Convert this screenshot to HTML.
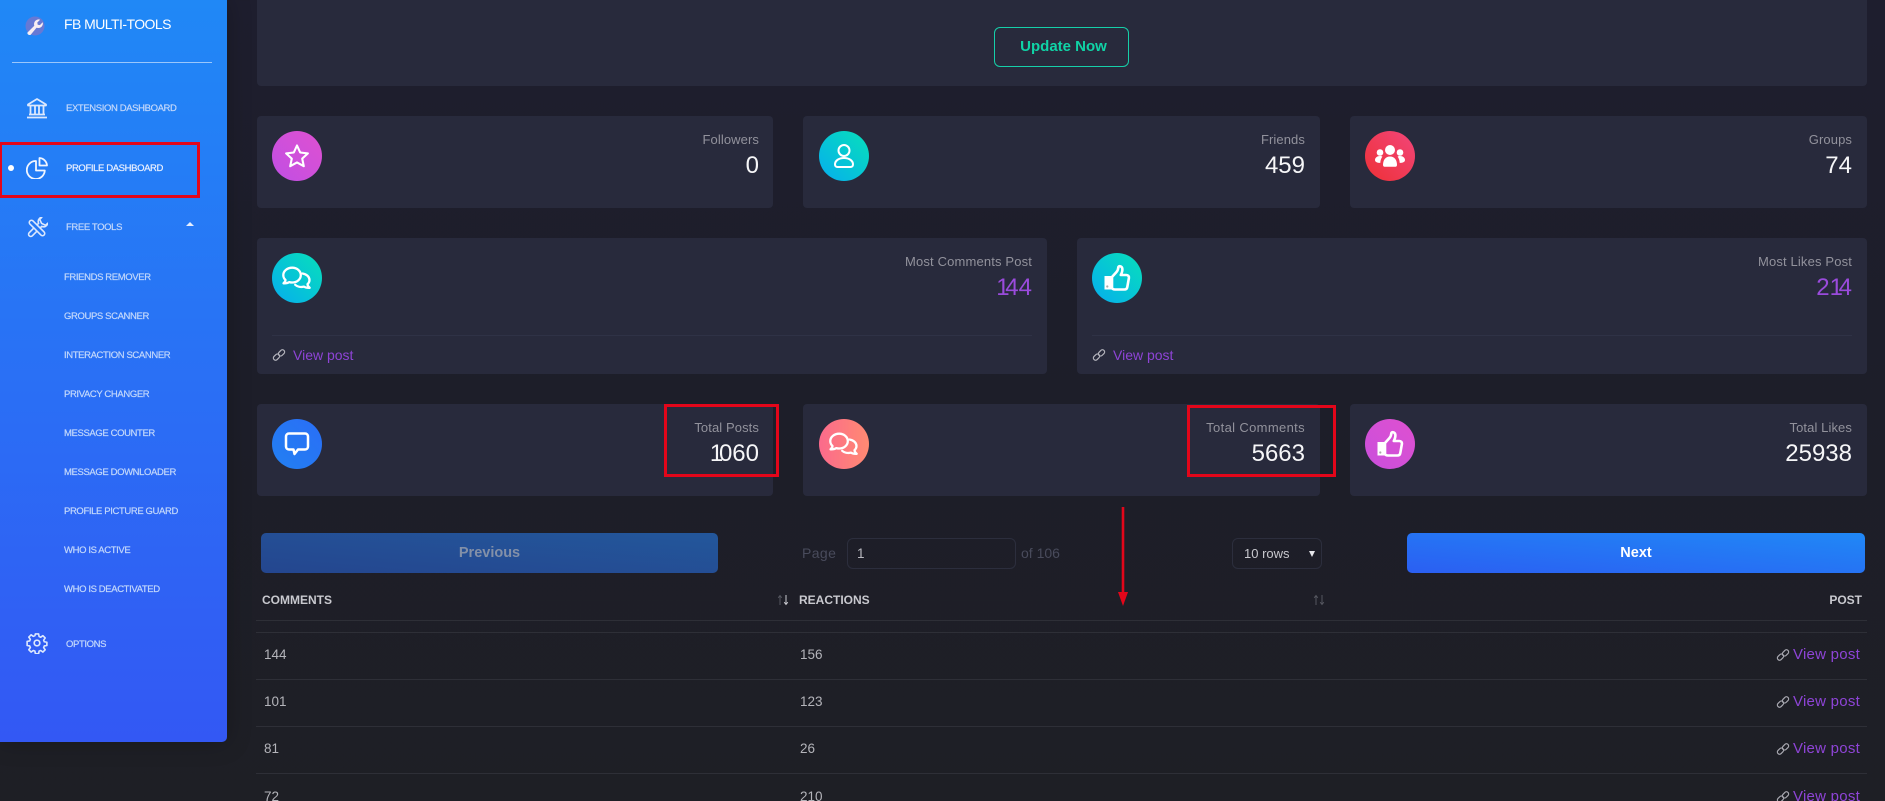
<!DOCTYPE html>
<html>
<head>
<meta charset="utf-8">
<style>
html,body{margin:0;padding:0;width:1885px;height:801px;overflow:hidden}
body{position:relative;background:linear-gradient(180deg,#1e1e2e 0%,#1d1e29 50%,#1e1f25 100%);font-family:"Liberation Sans",sans-serif;color:#fff}
.a{position:absolute;white-space:nowrap}
.card{position:absolute;background:#282a3c;border-radius:4px}
.ic{position:absolute;width:50px;height:50px;border-radius:50%}
.ic svg{position:absolute;left:9px;top:9px;width:32px;height:32px}
.lb{position:absolute;white-space:nowrap;font-size:13px;line-height:16px;color:#92929c;letter-spacing:.1px}
.nm{position:absolute;white-space:nowrap;font-size:24px;line-height:28px;color:#f6f6f8;margin-top:1px}
.nm i{font-style:normal;letter-spacing:-4.300px}
.pu{color:#9a4bdc}
.vp{position:absolute;white-space:nowrap;font-size:14px;line-height:18px;color:#8e44d6}
.dv{position:absolute;height:1px;background:#2f3246}
.side{position:absolute;left:0;top:0;width:227px;height:742px;background:linear-gradient(180deg,#2088f6 0%,#3358f4 100%);border-radius:0 0 5px 0;box-shadow:0 0 24px rgba(0,0,0,.25)}
.m{position:absolute;white-space:nowrap;font-size:9.5px;line-height:12px;letter-spacing:-.38px;color:#c3d8fb;-webkit-text-stroke:.2px #c3d8fb}
.si{position:absolute;left:26px;width:22px;height:22px}
.r{position:absolute;border:3px solid #e3061a;box-sizing:border-box}
.ln{position:absolute;left:256px;width:1611px;height:1px;background:#2e2f37}
.td{position:absolute;white-space:nowrap;font-size:13.5px;line-height:18px;color:#b4b4ba}
.th{position:absolute;white-space:nowrap;font-size:12px;line-height:14px;font-weight:bold;color:#c9c9cf}
.tv{position:absolute;white-space:nowrap;font-size:15px;line-height:18px;letter-spacing:.25px;color:#8e44d6}
svg{display:block}
</style>
</head>
<body>
<svg width="0" height="0" style="position:absolute">
<symbol id="chat" viewBox="0 0 32 32"><g fill="none" stroke="#fff" stroke-width="2.300" stroke-linejoin="round" stroke-linecap="round"><path d="M11.200 5.700c4.800 0 8.600 3.300 8.600 7.400s-3.800 7.400-8.600 7.400c-1 0-2-.15-2.900-.4-1.200.9-3 1.300-5.800 1.200 1.200-.9 1.900-2.100 2-3.300-1.400-1.300-2.200-3-2.200-4.900 0-4.100 3.900-7.400 8.900-7.400z"/><path d="M21.500 11.500c4 .6 7 3.300 7 6.500 0 1.600-.8 3.100-2 4.200.1 1.300.8 2.500 2.200 3.600-2.500.1-4.500-.3-5.800-1.200-3 .8-6.500.2-8.700-1.800"/></g></symbol>
<symbol id="thumb" viewBox="0 0 32 32"><path d="M3.500 14h7v13.500h-7z" fill="#fff"/><circle cx="6.300" cy="24.500" r="1.100" fill="#aaa"/><path d="M11 15l4.500-5c1-1.300 1.800-3 1.800-4.800 0-1.500 3.500-1.500 4 1.300.4 2.300-.5 4.500-1.500 6.500h5.500c1.800 0 2.900 1.300 2.600 3l-1.600 9c-.3 1.800-1.400 2.500-3 2.500H14c-1.500 0-3-.6-3-2z" fill="none" stroke="#fff" stroke-width="2.600" stroke-linejoin="round"/></symbol>
<symbol id="link" viewBox="0 0 14 14"><g fill="none" stroke="currentColor" stroke-width="1.200"><rect x="6" y="2.700" width="7" height="4.400" rx="2.200" transform="rotate(-45 9.500 4.900)"/><rect x="1" y="6.900" width="7" height="4.400" rx="2.200" transform="rotate(-45 4.500 9.100)"/></g></symbol>
<symbol id="sort" viewBox="0 0 14 12"><path d="M4 11V2M2.200 3.800L4 1.500l1.800 2.300" stroke="#55565f" stroke-width="1" fill="none"/><path d="M10 1v9M8.200 8.200L10 10.500l1.800-2.300" stroke="currentColor" stroke-width="1" fill="none"/></symbol>
</svg>

<!-- main content -->
<div class="card" style="left:257px;top:-10px;width:1610px;height:96px"></div>
<div class="a" style="left:994px;top:27px;width:135px;height:40px;box-sizing:border-box;border:1px solid #16cfa9;border-radius:6px;text-align:center;font-size:15px;font-weight:bold;line-height:38px;color:#10d3a6;padding-left:4px">Update Now</div>

<!-- row 1 -->
<div class="card" style="left:257px;top:116px;width:516px;height:92px"></div>
<div class="card" style="left:803px;top:116px;width:517px;height:92px"></div>
<div class="card" style="left:1350px;top:116px;width:517px;height:92px"></div>

<div class="ic" style="left:272px;top:131px;background:linear-gradient(to bottom left,#df50d0,#c04fe4)"><svg viewBox="0 0 32 32"><path d="M16 5.500l3.200 7 7.700 .9-5.700 5.200 1.600 7.600L16 22.400l-6.800 3.800 1.600-7.600-5.700-5.200 7.700-.9z" fill="none" stroke="#fff" stroke-width="2.100" stroke-linejoin="round"/></svg></div>
<div class="lb" style="right:1126px;top:132px">Followers</div>
<div class="nm" style="right:1126px;top:151px">0</div>

<div class="ic" style="left:819px;top:131px;background:linear-gradient(to bottom left,#07e0ba,#06aeee)"><svg viewBox="0 0 32 32"><g fill="none" stroke="#fff" stroke-width="2"><circle cx="16" cy="10.500" r="5.500"/><path d="M7 24.500c0-4 4-6.500 9-6.500s9 2.500 9 6.500c0 1.500-1 2.500-2.500 2.500h-13C8 27 7 26 7 24.500z"/></g></svg></div>
<div class="lb" style="right:580px;top:132px">Friends</div>
<div class="nm" style="right:580px;top:151px">459</div>

<div class="ic" style="left:1365px;top:131px;background:linear-gradient(to bottom left,#f2467a,#ee3036)"><svg viewBox="0 0 32 32"><g fill="#fff"><circle cx="16" cy="10" r="5"/><circle cx="6" cy="12.500" r="3.300"/><circle cx="26" cy="12.500" r="3.300"/><path d="M9 25c0-5 2.500-8.500 7-8.500s7 3.500 7 8.500c0 1-.7 1.700-1.500 1.700h-11C9.700 26.700 9 26 9 25z"/><path d="M1 20c0-2.300 2.200-4 5-4 1 0 1.800.2 2.400.6-1.200 1.500-2 3.700-2.100 6.300C3 22.900 1 21.800 1 20z"/><path d="M31 20c0-2.300-2.200-4-5-4-1 0-1.800.2-2.400.6 1.200 1.500 2 3.700 2.100 6.300 3.300 0 5.300-1.100 5.300-2.900z"/></g></svg></div>
<div class="lb" style="right:33px;top:132px">Groups</div>
<div class="nm" style="right:33px;top:151px">74</div>

<!-- row 2 -->
<div class="card" style="left:257px;top:238px;width:790px;height:136px"></div>
<div class="card" style="left:1077px;top:238px;width:790px;height:136px"></div>

<div class="ic" style="left:272px;top:253px;background:linear-gradient(to bottom left,#07e0ba,#06aeee)"><svg viewBox="0 0 32 32"><use href="#chat"/></svg></div>
<div class="lb" style="right:853px;top:254px;letter-spacing:.15px">Most Comments Post</div>
<div class="nm pu" style="right:853px;top:273px"><i>1</i>44</div>
<div class="dv" style="left:272px;top:335px;width:760px"></div>
<svg class="a" style="left:272px;top:348px;width:14px;height:14px;color:#b5b5bd"><use href="#link"/></svg>
<div class="vp" style="left:293px;top:346px">View post</div>

<div class="ic" style="left:1092px;top:253px;background:linear-gradient(to bottom left,#07e0ba,#06aeee)"><svg viewBox="0 0 32 32"><use href="#thumb"/></svg></div>
<div class="lb" style="right:33px;top:254px;letter-spacing:.15px">Most Likes Post</div>
<div class="nm pu" style="right:33px;top:273px">2<i>1</i>4</div>
<div class="dv" style="left:1092px;top:335px;width:760px"></div>
<svg class="a" style="left:1092px;top:348px;width:14px;height:14px;color:#b5b5bd"><use href="#link"/></svg>
<div class="vp" style="left:1113px;top:346px">View post</div>

<!-- row 3 -->
<div class="card" style="left:257px;top:404px;width:516px;height:92px"></div>
<div class="card" style="left:803px;top:404px;width:517px;height:92px"></div>
<div class="card" style="left:1350px;top:404px;width:517px;height:92px"></div>

<div class="ic" style="left:272px;top:419px;background:linear-gradient(to bottom left,#2a6ef6,#2280f2)"><svg viewBox="0 0 32 32"><path d="M8 5.500h16c1.700 0 3 1.300 3 3v10c0 1.700-1.300 3-3 3h-7l-3.500 4.500-1-4.500H8c-1.700 0-3-1.300-3-3v-10c0-1.700 1.300-3 3-3z" fill="none" stroke="#fff" stroke-width="2.500" stroke-linejoin="round"/></svg></div>
<div class="lb" style="right:1126px;top:420px">Total Posts</div>
<div class="nm" style="right:1126px;top:439px"><i>1</i>060</div>

<div class="ic" style="left:819px;top:419px;background:linear-gradient(to left,#ff8a72,#fb6a8c)"><svg viewBox="0 0 32 32"><use href="#chat"/></svg></div>
<div class="lb" style="right:580px;top:420px;letter-spacing:.35px">Total Comments</div>
<div class="nm" style="right:580px;top:439px">5663</div>

<div class="ic" style="left:1365px;top:419px;background:linear-gradient(to bottom left,#df50d0,#c94fdc)"><svg viewBox="0 0 32 32"><use href="#thumb"/></svg></div>
<div class="lb" style="right:33px;top:420px">Total Likes</div>
<div class="nm" style="right:33px;top:439px">25938</div>

<!-- pagination -->
<div class="a" style="left:261px;top:533px;width:457px;height:40px;border-radius:5px;background:linear-gradient(to top right,#24468f,#23579b);text-align:center;font-size:14.500px;font-weight:bold;line-height:40px;color:#8390a8">Previous</div>
<div class="a" style="left:802px;top:544px;font-size:14px;line-height:18px;color:#494b5c;letter-spacing:.4px">Page</div>
<div class="a" style="left:847px;top:538px;width:169px;height:31px;box-sizing:border-box;border:1px solid #2c2e3d;border-radius:6px;font-size:13.500px;line-height:29px;padding-left:9px;color:#b9b9c0">1</div>
<div class="a" style="left:1021px;top:544px;font-size:14px;line-height:18px;color:#494b5c">of 106</div>
<div class="a" style="left:1232px;top:538px;width:90px;height:31px;box-sizing:border-box;border:1px solid #2c2e3d;border-radius:6px;font-size:13px;line-height:29px;padding-left:11px;color:#c8c8ce">10 rows</div>
<div class="a" style="left:1309px;top:551px;width:0;height:0;border-left:3.500px solid transparent;border-right:3.500px solid transparent;border-top:6px solid #e6e6ea"></div>
<div class="a" style="left:1407px;top:533px;width:458px;height:40px;border-radius:5px;background:linear-gradient(to top right,#2b5ff2,#2088f6);text-align:center;font-size:14.500px;font-weight:bold;line-height:40px;color:#fff">Next</div>

<!-- table -->
<div class="th" style="left:262px;top:593px">COMMENTS</div>
<svg class="a" style="left:776px;top:594px;width:14px;height:12px;color:#c9c9cf"><use href="#sort"/></svg>
<div class="th" style="left:799px;top:593px">REACTIONS</div>
<svg class="a" style="left:1312px;top:594px;width:14px;height:12px;color:#55565f"><use href="#sort"/></svg>
<div class="th" style="right:23px;top:593px">POST</div>

<div class="ln" style="top:620px"></div>
<div class="ln" style="top:632px"></div>
<div class="ln" style="top:679px"></div>
<div class="ln" style="top:726px"></div>
<div class="ln" style="top:773px"></div>

<div class="td" style="left:264px;top:646px">144</div><div class="td" style="left:800px;top:646px">156</div>
<svg class="a" style="left:1776px;top:648px;width:14px;height:14px;color:#a9a9b1"><use href="#link"/></svg><div class="tv" style="right:25px;top:646px">View post</div>
<div class="td" style="left:264px;top:693px">101</div><div class="td" style="left:800px;top:693px">123</div>
<svg class="a" style="left:1776px;top:695px;width:14px;height:14px;color:#a9a9b1"><use href="#link"/></svg><div class="tv" style="right:25px;top:693px">View post</div>
<div class="td" style="left:264px;top:740px">81</div><div class="td" style="left:800px;top:740px">26</div>
<svg class="a" style="left:1776px;top:742px;width:14px;height:14px;color:#a9a9b1"><use href="#link"/></svg><div class="tv" style="right:25px;top:740px">View post</div>
<div class="td" style="left:264px;top:788px">72</div><div class="td" style="left:800px;top:788px">210</div>
<svg class="a" style="left:1776px;top:790px;width:14px;height:14px;color:#a9a9b1"><use href="#link"/></svg><div class="tv" style="right:25px;top:788px">View post</div>

<!-- sidebar -->
<div class="side"></div>
<svg class="a" style="left:25px;top:16px;width:20px;height:20px" viewBox="0 0 20 20"><circle cx="10" cy="10" r="9.500" fill="#7d74c9" opacity=".75"/><path d="M2.500 16.500l6.800-6.800c-.7-2.500.2-5 2.700-6 1.100-.4 2.200-.4 3.100 0l-2.800 2.800.4 2.200 2.200.4 2.800-2.800c.3 1 .2 2-.2 3-1 2.400-3.600 3.200-6 2.500l-5.800 6.900c-.9.900-3.900-.2-3.200-2.200z" fill="#f8eef2"/></svg>
<div class="a" style="left:64px;top:16px;font-size:14px;line-height:17px;letter-spacing:-.55px;color:#fff">FB MULTI-TOOLS</div>
<div class="a" style="left:12px;top:62px;width:200px;height:1px;background:rgba(255,255,255,.55)"></div>

<svg class="si" style="top:97px" viewBox="0 0 22 22"><g fill="none" stroke="#dce8fd" stroke-width="1.800"><path d="M2 7.500L11 2l9 5.500v1H2z" stroke-linejoin="round"/><path d="M4.500 9v8M9 9v8M13 9v8M17.500 9v8M3 17.500h16M1 20.500h20"/></g></svg>
<div class="m" style="left:66px;top:103px">EXTENSION DASHBOARD</div>

<div class="a" style="left:8px;top:165px;width:6px;height:6px;border-radius:50%;background:#fff"></div>
<svg class="si" style="top:157px" viewBox="0 0 22 22"><g fill="none" stroke="#f0f5ff" stroke-width="1.800"><path d="M10 4a9 9 0 1 0 8.800 9.500H10z" stroke-linejoin="round"/><path d="M13.500 1c4 .2 7.300 3.500 7.500 7.500h-7.500z" stroke-linejoin="round"/></g></svg>
<div class="m" style="left:66px;top:163px;color:#e9f0ff;-webkit-text-stroke:.2px #e9f0ff">PROFILE DASHBOARD</div>
<div class="r" style="left:-1px;top:142px;width:201px;height:56px"></div>

<svg class="si" style="top:217px" viewBox="0 0 22 22"><g fill="none" stroke="#dce8fd" stroke-width="1.600" stroke-linejoin="round"><rect x="8.800" y="1" width="4.400" height="20" rx="2.200" transform="rotate(-45 11 11)"/><g transform="rotate(45 11 11)"><path d="M8.800 13.500v6.300a2.200 2.200 0 0 0 4.400 0v-6.300"/><path d="M8.800 8.500V6.500C6.800 5.700 6 4 6 2.500c0-1 .3-1.800.8-2.500v3L11 4.500 15.200 3V0c.5.700.8 1.500.8 2.500 0 1.500-.8 3.200-2.800 4v2"/></g></g></svg>
<div class="m" style="left:66px;top:222px">FREE TOOLS</div>
<div class="a" style="left:186px;top:222px;width:0;height:0;border-left:4px solid transparent;border-right:4px solid transparent;border-bottom:4px solid #e6effe"></div>

<div class="m" style="left:64px;top:272px">FRIENDS REMOVER</div>
<div class="m" style="left:64px;top:311px">GROUPS SCANNER</div>
<div class="m" style="left:64px;top:350px">INTERACTION SCANNER</div>
<div class="m" style="left:64px;top:389px">PRIVACY CHANGER</div>
<div class="m" style="left:64px;top:428px">MESSAGE COUNTER</div>
<div class="m" style="left:64px;top:467px">MESSAGE DOWNLOADER</div>
<div class="m" style="left:64px;top:506px">PROFILE PICTURE GUARD</div>
<div class="m" style="left:64px;top:545px">WHO IS ACTIVE</div>
<div class="m" style="left:64px;top:584px">WHO IS DEACTIVATED</div>

<svg class="si" style="top:632px" viewBox="0 0 22 22"><g fill="none" stroke="#dce8fd" stroke-width="1.700" stroke-linejoin="round"><circle cx="11" cy="11" r="2.800"/><path d="M9.300 1.500h3.400l.5 2.700 1.700.7 2.300-1.600 2.400 2.400-1.600 2.300.7 1.700 2.700.5v3.400l-2.700.5-.7 1.700 1.600 2.300-2.400 2.400-2.300-1.600-1.700.7-.5 2.700H9.300l-.5-2.700-1.700-.7-2.300 1.600-2.400-2.400 1.600-2.300-.7-1.700-2.700-.5V9.300l2.700-.5.7-1.700-1.600-2.300 2.400-2.400 2.300 1.600 1.700-.7z" transform="translate(.55 .55) scale(.95)"/></g></svg>
<div class="m" style="left:66px;top:639px">OPTIONS</div>

<!-- annotations -->
<div class="r" style="left:664px;top:404px;width:115px;height:73px"></div>
<div class="r" style="left:1187px;top:405px;width:149px;height:72px"></div>
<svg class="a" style="left:1115px;top:506px;width:16px;height:102px" viewBox="0 0 16 102"><path d="M8 1v90" stroke="#e3061a" stroke-width="2.600"/><path d="M3 86h10L8 100z" fill="#e3061a"/></svg>
</body>
</html>
